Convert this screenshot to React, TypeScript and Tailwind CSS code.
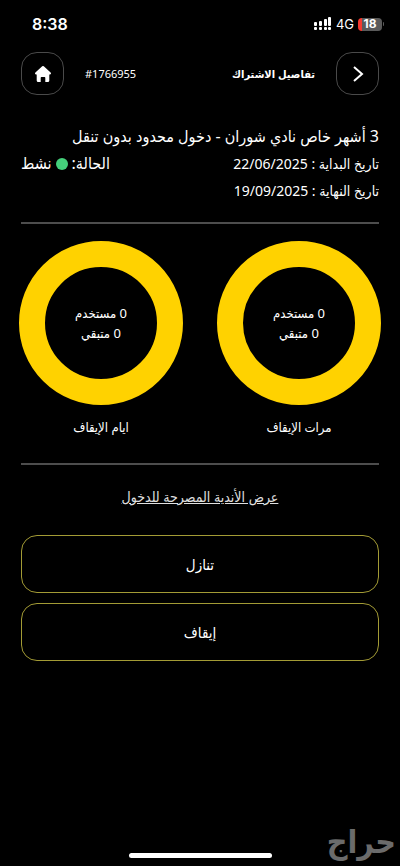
import type { ReactNode } from 'react';

interface IRingProps {
  used: number;
  left: number;
  label: string;
}

const Ring = ({ used, left, label }: IRingProps) => (
  <div className="flex flex-col items-center gap-3">
    <div className="flex h-[164px] w-[164px] flex-col items-center justify-center rounded-full border-[26px] border-[#ffd200] text-[13px] leading-5">
      <p className="whitespace-nowrap">{used} مستخدم</p>
      <p className="whitespace-nowrap">{left} متبقي</p>
    </div>
    <p className="text-[13px] leading-5">{label}</p>
  </div>
);

interface IIconButtonProps {
  label: string;
  children: ReactNode;
}

const IconButton = ({ label, children }: IIconButtonProps) => (
  <button
    aria-label={label}
    className="flex h-[43px] w-[43px] shrink-0 items-center justify-center rounded-2xl border border-[#4a4a4a]"
  >
    {children}
  </button>
);

const ActionButton = ({ children }: { children: ReactNode }) => (
  <button className="h-[58px] w-full rounded-2xl border border-[#a39b35] text-[15px] leading-6">
    {children}
  </button>
);

const StatusBar = () => (
  <div
    dir="ltr"
    className="flex h-12 items-center justify-between pr-4 pl-8 font-['Inter',sans-serif]"
  >
    <span className="text-[16px] leading-6 font-semibold">8:38</span>
    <div className="flex items-center gap-1">
      {/* Dual SIM signal */}
      <svg width="18" height="14" viewBox="0 0 18 14" fill="white">
        <rect x="0" y="5" width="3" height="4" rx="1" />
        <rect x="5" y="4" width="3" height="5" rx="1" />
        <rect x="10" y="2" width="3" height="7" rx="1" />
        <rect x="14" y="0" width="3" height="9" rx="1" />
        <rect x="0" y="10" width="3" height="3" rx="1" />
        <rect x="5" y="10" width="3" height="3" rx="1" />
        <rect x="10" y="10" width="3" height="3" rx="1" />
        <rect x="14" y="10" width="3" height="3" rx="1" />
      </svg>
      <span className="text-[13px] leading-5">4G</span>
      <div className="flex items-center gap-px">
        <div className="flex h-[13px] w-6 items-center justify-center rounded-[4px] bg-linear-to-r from-[#f4392f] from-18% to-[#5a5a5a] to-18% text-[12px] leading-3 font-bold">
          18
        </div>
        <div className="h-1 w-px rounded-r-full bg-[#5a5a5a]" />
      </div>
    </div>
  </div>
);

export default function App() {
  return (
    <div
      dir="rtl"
      lang="ar"
      className="relative flex min-h-screen flex-col bg-black font-['Noto_Sans','DejaVu_Sans_Condensed','DejaVu_Sans',sans-serif] text-white"
    >
      <StatusBar />

      <header className="flex items-center justify-between px-[21px] pt-1">
        <div className="flex items-center gap-[21px]">
          <IconButton label="رجوع">
            <svg width="12" height="18" viewBox="0 0 12 18" fill="none" stroke="white" strokeWidth="2">
              <path d="M2 2l8 7-8 7" />
            </svg>
          </IconButton>
          <h1 className="text-[11px] leading-5 font-bold">تفاصيل الاشتراك</h1>
        </div>
        <div className="flex items-center gap-[21px]">
          <span dir="ltr" className="text-[11px] leading-5">
            #1766955
          </span>
          <IconButton label="الرئيسية">
            <svg width="18" height="18" viewBox="0 0 18 18" fill="white">
              <path d="M8.2 1.3a1.2 1.2 0 0 1 1.6 0l6.8 6.2c.8.8.4 1.9-.7 1.9h-.6v6.1c0 .9-.6 1.5-1.5 1.5h-2.500v-4.100c0-.6-.4-1-1-1H7.700c-.6 0-1 .4-1 1V17H4.200c-.9 0-1.500-.6-1.500-1.500V9.400h-.6c-1.100 0-1.500-1.100-.7-1.900z" />
            </svg>
          </IconButton>
        </div>
      </header>

      <main className="flex flex-col px-[21px] pt-7">
        <section className="text-[14px] leading-[27px]">
          <h2 className="text-[16px] leading-[27px]">3 أشهر خاص نادي شوران - دخول محدود بدون تنقل</h2>
          <div className="flex items-center justify-between">
            <p>تاريخ البداية : 22/06/2025</p>
            <p className="flex items-center gap-1 text-[16px] leading-[27px]">
              الحالة:
              <span className="h-3 w-3 rounded-full bg-[#45d07b]" />
              <span>نشط</span>
            </p>
          </div>
          <p>تاريخ النهاية : 19/09/2025</p>
        </section>

        <hr className="mt-[18px] border-t-2 border-[#4d4d4d]" />

        <section className="-mx-[2px] mt-[17px] flex justify-between">
          <Ring used={0} left={0} label="مرات الإيقاف" />
          <Ring used={0} left={0} label="ايام الإيقاف" />
        </section>

        <hr className="mt-[26px] border-t-2 border-[#4d4d4d]" />

        <a href="#clubs" className="mt-[22px] self-center text-[14px] leading-5 text-[#e0e0e0] underline">
          عرض الأندية المصرحة للدخول
        </a>

        <div className="mt-7 flex flex-col gap-[10px]">
          <ActionButton>تنازل</ActionButton>
          <ActionButton>إيقاف</ActionButton>
        </div>
      </main>

      <footer className="mt-auto flex justify-center pb-2">
        <div className="h-[5px] w-[143px] rounded-full bg-white" />
      </footer>

      {/* Marketplace watermark */}
      <span className="absolute right-1 bottom-0 text-[32px] leading-[50px] font-bold text-[#6b6b6b]">
        حراج
      </span>
    </div>
  );
}
